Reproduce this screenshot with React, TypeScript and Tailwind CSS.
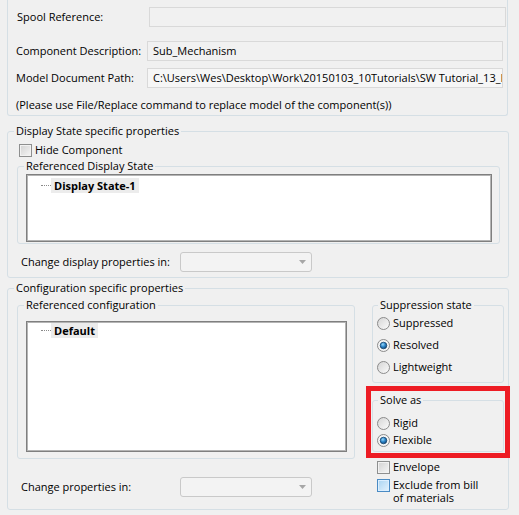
import React from "react";

function Radio({ checked }: { checked?: boolean }) {
  return (
    <svg width="13" height="13" viewBox="0 0 13 13" className="shrink-0">
      <defs>
        <linearGradient id="rgfill" x1="0" y1="0" x2="1" y2="1">
          <stop offset="0" stopColor="#d4d4d4" />
          <stop offset="1" stopColor="#fcfcfc" />
        </linearGradient>
        <radialGradient id="rgdot" cx="0.4" cy="0.35" r="0.75">
          <stop offset="0" stopColor="#9ad8f8" />
          <stop offset="0.45" stopColor="#2d87cc" />
          <stop offset="1" stopColor="#0d3a66" />
        </radialGradient>
      </defs>
      <circle cx="6.5" cy="6.5" r="6" fill={checked ? "#f4f4f4" : "url(#rgfill)"} stroke="#8b8b8b" />
      {checked && <circle cx="6.5" cy="6.5" r="3.3" fill="url(#rgdot)" stroke="#16456f" strokeWidth="0.8" />}
    </svg>
  );
}

function Check({ blue }: { blue?: boolean }) {
  return blue ? (
    <span className="block w-[13px] h-[13px] shrink-0 border border-[#4a8bc4] bg-linear-to-br from-[#a9d4f2] to-[#e4f2fc] shadow-[inset_0_0_0_1px_#dcefff]" />
  ) : (
    <span className="block w-[13px] h-[13px] shrink-0 border border-[#8e8f8f] bg-linear-to-br from-[#d2d2d2] to-[#f6f6f6] shadow-[inset_0_0_0_1px_#f2f2f2]" />
  );
}

function Dropdown() {
  return (
    <div className="w-[132px] h-[20px] shrink-0 border border-[#c9c9c9] rounded-[3px] bg-[#f3f3f3] flex items-center justify-end pr-[5px]">
      <svg width="7" height="4" viewBox="0 0 7 4">
        <path d="M0 0H7L3.5 4Z" fill="#a6a6a6" />
      </svg>
    </div>
  );
}

function TreeItem({ label }: { label: string }) {
  return (
    <div className="flex items-center h-[15px] pl-[14px]">
      <span className="block w-[10px] border-t border-dotted border-[#8a8a8a]" />
      <span className="bg-[#ececec] px-[3px] h-[15px] leading-[15px] font-bold whitespace-nowrap">{label}</span>
    </div>
  );
}

export default function App() {
  return (
    <div className="w-[519px] h-[515px] overflow-hidden bg-[#f0f0f0] text-[11px] leading-[16px] text-black whitespace-nowrap font-['Segoe_UI','Open_Sans',sans-serif]">
      {/* Top group (top edge off-screen) */}
      <div className="ml-[7px] mr-[11px] border-x border-b border-[#d5dfe5] rounded-b-[3px] pt-[7px] pb-[2px]">
        <div className="flex items-center h-[20px] pl-[9px]">
          <span className="w-[132px] shrink-0">Spool Reference:</span>
          <div className="w-[357px] h-[20px] shrink-0 border border-[#d9d9d9] bg-[#f1f1f1]" />
        </div>
        <div className="flex items-center h-[20px] pl-[8px] mt-[14px]">
          <span className="w-[131px] shrink-0">Component Description:</span>
          <div className="w-[356px] h-[20px] shrink-0 border border-[#d9d9d9] bg-[#f1f1f1] pl-[5px] flex items-center">
            Sub_Mechanism
          </div>
        </div>
        <div className="flex items-center h-[20px] pl-[8px] mt-[7px]">
          <span className="w-[131px] shrink-0">Model Document Path:</span>
          <div className="w-[356px] h-[20px] shrink-0 border border-[#d9d9d9] bg-[#f6f6f6] pl-[5px] flex items-center overflow-hidden">
            C:\Users\Wes\Desktop\Work\20150103_10Tutorials\SW Tutorial_13_Introduction
          </div>
        </div>
        <div className="mt-[9px] pl-[8px] h-[16px]">
          (Please use File/Replace command to replace model of the component(s))
        </div>
      </div>

      {/* Display State group */}
      <fieldset className="mt-[7px] ml-[7px] mr-[10px] border border-[#d5dfe5] rounded-[3px] pb-[5px]">
        <legend className="ml-[6px] px-[2px] leading-[16px]">Display State specific properties</legend>
        <div className="flex items-center h-[16px] mt-[3px] pl-[11px] gap-[3px]">
          <Check />
          <span>Hide Component</span>
        </div>
        <fieldset className="ml-[9px] mr-[8px] border border-[#d5dfe5] rounded-[3px] pb-[1px]">
          <legend className="ml-[6px] px-[2px] leading-[16px]">Referenced Display State</legend>
          <div className="ml-[8px] mr-[7px] h-[68px] border border-[#7f7f7f] bg-white shadow-[inset_0_0_0_1px_#b4b4b4] pt-[3px]">
            <TreeItem label="Display State-1" />
          </div>
        </fieldset>
        <div className="mt-[8px] flex items-center h-[20px] pl-[13px]">
          <span className="w-[159px] shrink-0">Change display properties in:</span>
          <Dropdown />
        </div>
      </fieldset>

      {/* Configuration group */}
      <fieldset className="mt-[2px] ml-[7px] mr-[10px] border border-[#d5dfe5] rounded-[3px] pb-[5px]">
        <legend className="ml-[6px] px-[2px] leading-[16px]">Configuration specific properties</legend>
        <div className="flex items-start">
          <div className="ml-[9px] w-[338px] shrink-0">
            <fieldset className="mt-[1px] border border-[#d5dfe5] rounded-[3px] pb-[6px]">
              <legend className="ml-[6px] px-[2px] leading-[16px]">Referenced configuration</legend>
              <div className="mt-[8px] ml-[8px] mr-[7px] h-[131px] border border-[#7f7f7f] bg-white shadow-[inset_0_0_0_1px_#b4b4b4] pt-[1px]">
                <TreeItem label="Default" />
              </div>
            </fieldset>
            <div className="mt-[18px] flex items-center h-[20px] pl-[4px]">
              <span className="w-[159px] shrink-0">Change properties in:</span>
              <Dropdown />
            </div>
          </div>

          <div className="ml-auto mr-[4px] w-[132px] flex flex-col">
            <fieldset className="mt-[1px] border border-[#d5dfe5] rounded-[3px] pb-[7px]">
              <legend className="ml-[5px] px-[2px] leading-[16px]">Suppression state</legend>
              <div className="mt-[2px] flex items-center h-[16px] pl-[4px] gap-[3px]">
                <Radio />
                <span>Suppressed</span>
              </div>
              <div className="mt-[6px] flex items-center h-[16px] pl-[4px] gap-[3px]">
                <Radio checked />
                <span>Resolved</span>
              </div>
              <div className="mt-[6px] flex items-center h-[16px] pl-[4px] gap-[3px]">
                <Radio />
                <span>Lightweight</span>
              </div>
            </fieldset>

            <div className="relative mt-[9px]">
              <fieldset className="border border-[#d5dfe5] rounded-[3px] pb-[3px]">
                <legend className="ml-[5px] px-[2px] leading-[16px]">Solve as</legend>
                <div className="mt-[7px] flex items-center h-[16px] pl-[4px] gap-[3px]">
                  <Radio />
                  <span>Rigid</span>
                </div>
                <div className="mt-[1px] flex items-center h-[16px] pl-[4px] gap-[3px]">
                  <Radio checked />
                  <span>Flexible</span>
                </div>
              </fieldset>
              <div className="absolute -inset-[6px] border-[5px] border-[#ed1c24] pointer-events-none" />
            </div>

            <div className="mt-[7px] flex items-center h-[16px] pl-[5px] gap-[3px]">
              <Check />
              <span>Envelope</span>
            </div>
            <div className="mt-[3px] flex items-start pl-[5px] gap-[3px]">
              <span className="mt-[1px]">
                <Check blue />
              </span>
              <span className="leading-[13px]">
                Exclude from bill
                <br />
                of materials
              </span>
            </div>
          </div>
        </div>
      </fieldset>
    </div>
  );
}
